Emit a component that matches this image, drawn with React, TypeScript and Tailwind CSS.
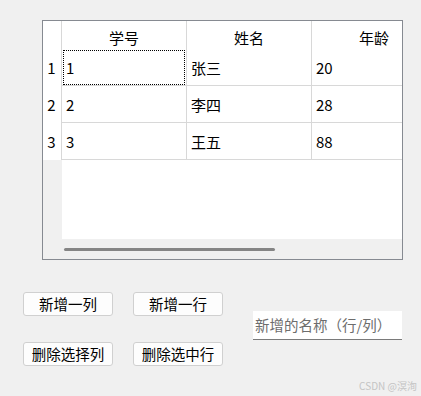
const font = { fontFamily: '"Noto Sans CJK SC", "Noto Sans", sans-serif' };

const rows = [
  ["1", "张三", "20"],
  ["2", "李四", "28"],
  ["3", "王五", "88"],
];

function Btn({ label }: { label: string }) {
  return (
    <button className="w-[90px] h-[24px] rounded-[3px] border border-[#d0d0d0] bg-[#fdfdfd] text-[14.5px] leading-none text-black flex items-center justify-center">
      {label}
    </button>
  );
}

export default function App() {
  return (
    <div className="relative w-[421px] h-[396px] bg-[#f0f0f0] overflow-hidden" style={font}>
      <div className="pt-[20px] pl-[42px]">
        <div className="w-[361px] h-[240px] border border-[#868a91] bg-white flex flex-col overflow-hidden">
          <div className="flex h-[28px] shrink-0 text-[15px] leading-none text-black">
            <div className="w-[19px] shrink-0 border-r border-[#d8d8d8]" />
            {["学号", "姓名", "年龄"].map((h) => (
              <div key={h} className="w-[125px] shrink-0 border-r border-[#d8d8d8] flex items-center justify-center pt-[4px]">
                {h}
              </div>
            ))}
          </div>
          {rows.map((r, i) => (
            <div key={i} className="flex h-[37px] shrink-0 text-[15px] leading-none text-black">
              <div className="w-[19px] shrink-0 border-r border-[#d8d8d8] flex items-center justify-center pr-[1px]">
                {i + 1}
              </div>
              {r.map((c, j) => (
                <div key={j} className="w-[125px] shrink-0 border-r border-b border-[#d8d8d8] flex items-center pl-[4px] relative">
                  {i === 0 && j === 0 && (
                    <div className="absolute left-[1px] top-[1px] right-[1px] bottom-[0px] border border-dotted border-black" />
                  )}
                  <span className="relative">{c}</span>
                </div>
              ))}
            </div>
          ))}
          <div className="flex flex-1">
            <div className="w-[19px] shrink-0 bg-[#f0f0f0]" />
            <div className="flex-1 bg-white" />
          </div>
          <div className="h-[20px] shrink-0 bg-[#f0f0f0] pl-[21px] pt-[9px]">
            <div className="w-[211px] h-[3px] rounded-full bg-[#858585]" />
          </div>
        </div>
      </div>

      <div className="flex">
        <div className="ml-[23px] mt-[32px] grid grid-cols-2 gap-x-[20px] gap-y-[26px]">
          <Btn label="新增一列" />
          <Btn label="新增一行" />
          <Btn label="删除选择列" />
          <Btn label="删除选中行" />
        </div>
        <div className="ml-[30px] mt-[51px] w-[149px] h-[29px] bg-white border-b border-[#7a7a7a] flex items-center pl-[2px] text-[14.5px] leading-none text-[#6d6d6d]">
          新增的名称（行/列）
        </div>
      </div>

      <div className="absolute right-[4px] bottom-[5px] text-[10px] leading-none text-[#c4c4c4]">
        CSDN @溟洵
      </div>
    </div>
  );
}
